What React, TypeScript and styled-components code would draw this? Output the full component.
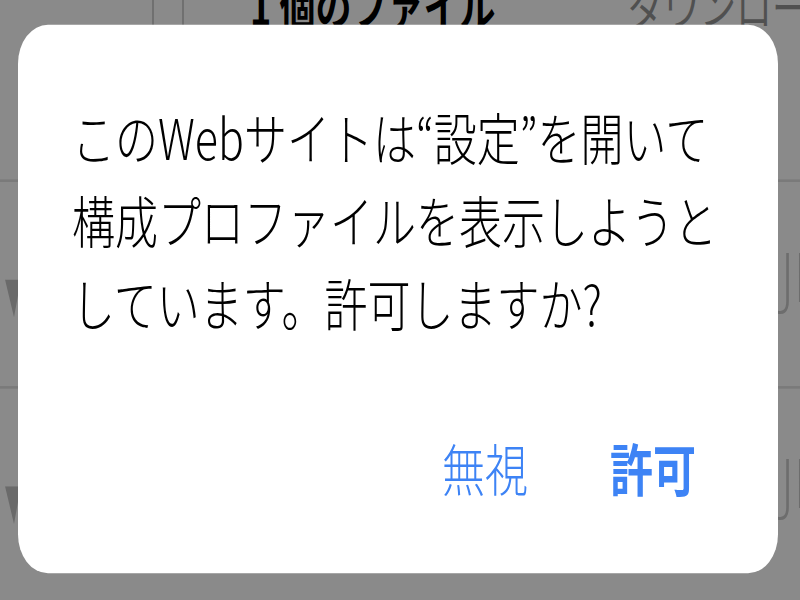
import styled, { createGlobalStyle } from 'styled-components';

// the source screenshot is stretched vertically, so the whole stage is laid out
// at normal proportions and then scaled on the Y axis
const STRETCH = 1.3;

const GlobalStyle = createGlobalStyle`
  html, body {
    margin: 0;
    padding: 0;
  }
  body {
    width: 800px;
    height: 600px;
    overflow: hidden;
    background: #8a8a8a;
    font-family: "Noto Sans CJK JP", "Noto Sans", sans-serif;
  }
`;

const Stage = styled.div`
  position: relative;
  width: 800px;
  height: ${600 / STRETCH}px;
  overflow: hidden;
  background: #ffffff;
  transform: scaleY(${STRETCH});
  transform-origin: top left;
`;

/* ---------- file list behind the alert ---------- */

const FileList = styled.div`
  display: flex;
  flex-direction: column;
`;

const HeaderRow = styled.div`
  display: flex;
  height: 138px;
`;

const HeaderCell = styled.div<{ $w: number; $pad?: number; $divider?: boolean }>`
  flex: none;
  width: ${(p) => p.$w}px;
  padding-left: ${(p) => p.$pad ?? 0}px;
  box-sizing: border-box;
  border-right: ${(p) => (p.$divider ? '2px solid #cfcfcf' : 'none')};
`;

const HeaderText = styled.div<{ $bold?: boolean }>`
  margin-top: -15px;
  font-size: 36px;
  line-height: 36px;
  white-space: nowrap;
  font-weight: ${(p) => (p.$bold ? 700 : 400)};
  color: ${(p) => (p.$bold ? '#000000' : '#949494')};
`;

const Row = styled.div`
  display: flex;
  align-items: center;
  height: 159px;
  box-sizing: border-box;
  border-top: 2px solid #e2e2e2;
`;

const Marker = styled.svg`
  flex: none;
  margin-left: 3px;
  margin-top: 22px;
`;

const FileType = styled.span`
  margin-left: auto;
  margin-bottom: 14px;
  width: 19px;
  white-space: nowrap;
  font-family: "Open Sans", "Noto Sans", sans-serif;
  font-weight: 300;
  font-size: 52px;
  color: #cacaca;
`;

/* ---------- alert ---------- */

const Dim = styled.div`
  position: absolute;
  inset: 0;
  display: flex;
  align-items: flex-start;
  padding: 18.5px 0 0 18px;
  box-sizing: border-box;
  background: rgba(0, 0, 0, 0.46);
`;

const Alert = styled.div`
  display: flex;
  flex-direction: column;
  width: 760px;
  height: 422px;
  padding: 53px 82px 50px 54px;
  box-sizing: border-box;
  background: #ffffff;
  border-radius: 30px;
`;

const Message = styled.p`
  margin: 0;
  font-size: 43px;
  line-height: 64px;
  font-weight: 300;
  color: #000000;
  white-space: nowrap;
`;

const Actions = styled.div`
  margin-top: auto;
  display: flex;
  justify-content: flex-end;
  gap: 82px;
`;

const ActionButton = styled.button<{ $primary?: boolean }>`
  padding: 0;
  border: none;
  background: none;
  font-family: inherit;
  font-size: 43px;
  line-height: 64px;
  font-weight: ${(p) => (p.$primary ? 700 : 300)};
  color: #3d83f5;
  cursor: pointer;
`;

const RowMarker = () => (
  <Marker width="16" height="30" viewBox="0 0 16 30">
    <polygon points="2,0 16,0 16,8 11,29" fill="#c4c4c4" />
  </Marker>
);

const App = () => {
  return (
    <>
      <GlobalStyle />
      <Stage>
        <FileList>
          <HeaderRow>
            <HeaderCell $w={154} $divider />
            <HeaderCell $w={30} $divider />
            <HeaderCell $w={444} $pad={66}>
              <HeaderText $bold>1 個のファイル</HeaderText>
            </HeaderCell>
            <HeaderCell $w={172}>
              <HeaderText>ダウンロード</HeaderText>
            </HeaderCell>
          </HeaderRow>
          <Row>
            <RowMarker />
            <FileType>JPEG</FileType>
          </Row>
          <Row>
            <RowMarker />
            <FileType>JPEG</FileType>
          </Row>
        </FileList>

        <Dim>
          <Alert role="alertdialog">
            <Message>
              このWebサイトは“設定”を開いて
              <br />
              構成プロファイルを表示しようと
              <br />
              しています。許可しますか?
            </Message>
            <Actions>
              <ActionButton>無視</ActionButton>
              <ActionButton $primary>許可</ActionButton>
            </Actions>
          </Alert>
        </Dim>
      </Stage>
    </>
  );
};

export default App;
